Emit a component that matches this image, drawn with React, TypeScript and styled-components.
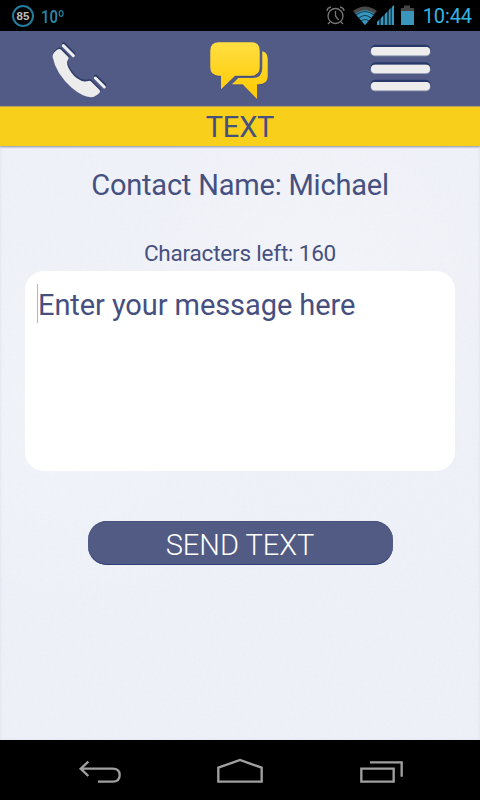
import React from "react";
import styled, { createGlobalStyle } from "styled-components";

const GlobalStyle = createGlobalStyle`
  * { box-sizing: border-box; }
  body { margin: 0; background: #000; font-family: Roboto, sans-serif; }
`;

const paperGrain =
  "url(\"data:image/svg+xml,%3Csvg xmlns='http://www.w3.org/2000/svg' width='240' height='240'%3E%3Cfilter id='n'%3E%3CfeTurbulence type='fractalNoise' baseFrequency='.35' numOctaves='3' stitchTiles='stitch'/%3E%3C/filter%3E%3Crect width='240' height='240' filter='url(%23n)' opacity='.035'/%3E%3C/svg%3E\")";

const Screen = styled.div`
  width: 480px;
  height: 800px;
  overflow: hidden;
  display: flex;
  flex-direction: column;
  background: #000;
`;

const StatusBar = styled.header`
  height: 31px;
  flex: none;
  display: flex;
  justify-content: space-between;
  padding: 0 8px 0 12px;
`;

const StatusGroup = styled.div`
  display: flex;
  align-items: center;
`;

const BatteryRing = styled.div`
  width: 22px;
  height: 22px;
  border: 2px solid #237b9c;
  border-radius: 50%;
  display: flex;
  align-items: center;
  justify-content: center;
  color: #bdbdbd;
  font: bold 11.5px/18px "Liberation Sans", sans-serif;
`;

const Temperature = styled.span`
  margin: 2px 0 0 7px;
  color: #2586a9;
  font: 600 18px/20px Roboto, sans-serif;
  display: inline-block;
  transform: scaleX(0.82);
  transform-origin: left;
`;

const Clock = styled.time`
  color: #33b5e5;
  font-size: 20px;
  line-height: 31px;
  letter-spacing: -0.1px;
  margin-left: 7px;
  padding-top: 2px;
`;

const TopNav = styled.nav`
  height: 75px;
  flex: none;
  display: flex;
  gap: 75px;
  padding-left: 40px;
  background: #525b86;
`;

const NavButton = styled.button<{ $width: number }>`
  width: ${(p) => p.$width}px;
  height: 75px;
  padding: 0;
  border: 0;
  background: none;
  svg { display: block; }
`;

const TitleBar = styled.h1`
  height: 40px;
  flex: none;
  margin: 0;
  z-index: 1;
  background: #f8cf1b;
  border-top: 1px solid #bca456;
  color: #46507f;
  text-align: center;
  font-size: 29px;
  font-weight: 400;
  line-height: 41px;
  letter-spacing: -0.2px;
  box-shadow: 0 1px 2px #8c91ac;
`;

const Content = styled.main`
  height: 594px;
  flex: none;
  display: flex;
  flex-direction: column;
  align-items: center;
  color: #46507f;
  background: ${paperGrain},
    radial-gradient(circle at 65% 23%, #f4f5fa 0, transparent 34%),
    radial-gradient(circle at 15% 45%, #f2f5fa 0, transparent 36%),
    linear-gradient(#f0f2f9, #eef1f8);
  box-shadow: inset 0 0 3px #d9dce7;
`;

const ContactName = styled.p`
  margin: 21px 0 0;
  font-size: 29px;
  line-height: 36px;
  letter-spacing: -0.2px;
`;

const Counter = styled.p`
  margin: 37px 0 0;
  font-size: 22.5px;
  line-height: 26px;
  letter-spacing: -0.2px;
`;

const MessageField = styled.div`
  width: 430px;
  height: 200px;
  margin-top: 5px;
  padding: 13px 12px;
  border-radius: 19px;
  background: #fff;
`;

const Placeholder = styled.span`
  display: block;
  height: 39px;
  border-left: 1px solid #b5b5b5;
  font-size: 29px;
  line-height: 42px;
  letter-spacing: -0.08px;
`;

const SendButton = styled.button`
  width: 305px;
  height: 44px;
  margin-top: 50px;
  padding: 4px 0 0;
  border: 0;
  border-radius: 19px;
  background: #525b84;
  box-shadow: inset 0 -1px #2c407b, inset 0 1px #46527c;
  color: #fff;
  font: 300 29px/40px Roboto, sans-serif;
`;

const SystemNav = styled.footer`
  height: 60px;
  flex: none;
  display: flex;
  align-items: center;
  justify-content: center;
`;

const StatusIcons = () => (
  <svg width="106" height="31" viewBox="310 0 106 31">
    <g fill="none" stroke="#777" strokeWidth="1.3">
      <circle cx="335.5" cy="16" r="7.5" />
      <path d="M335.5 11v5l3 4M327 11q0-3 4-4M344 11q0-3-4-4M330 22l-2 2M341 22l2 2" />
    </g>
    <path d="M353 11Q365 2 377 11L365 25Z" fill="#484848" />
    <path d="M355.5 14Q365 6.5 374.5 14L365 25Z" fill="#3698c0" />
    <path d="M356 15Q365 8 374 15M359 18Q365 13 371 18M361 21Q365 18 369 21" fill="none" stroke="#133b4b" strokeWidth="1.2" />
    <path d="M377 25v-3l2-2v5zM381 25v-7l2-2v9zM385 25V14l2-2v13zM389 25V10l1.5-2v17zM392 25V7l2-2v20z" fill="#3797bd" />
    <path d="M377 25v-3l17-17v20z" fill="#3797bd" opacity=".45" />
    <path d="M401 8h3V5.5h6V8h4v9h-13z" fill="#454545" />
    <path d="M401 11h13v14h-13z" fill="#3995bc" />
  </svg>
);

const PhoneIcon = () => {
  const handset =
    "M38 82Q36 74 46 64Q53 57 58 57Q61 57 64 60L84 80Q88 84 85 88Q78 97 84 110Q94 132 111 145Q128 158 145 153Q150 151 154 155L179 180Q182 184 178 189Q166 201 153 202Q127 200 95 173Q48 132 38 82Z";
  return (
    <svg width="80" height="75" viewBox="0 3 240 225">
      <g fill="#2d3a67" stroke="#2d3a67" strokeWidth="2" transform="translate(1 -4)">
        <path d={handset} />
        <path d="M70 46l30 30M166 143l27 27" strokeWidth="11" strokeLinecap="round" />
      </g>
      <path d={handset} fill="#ececec" />
      <path d="M70 47l30 30M166 144l27 27" stroke="#eee" strokeWidth="9" strokeLinecap="round" />
    </svg>
  );
};

const ChatIcon = () => (
  <svg width="90" height="75" viewBox="0 3 270 225">
    <defs>
      <linearGradient id="gold" x1="0" y1="37" x2="0" y2="205" gradientUnits="userSpaceOnUse">
        <stop stopColor="#ffdf42" />
        <stop offset="1" stopColor="#ffc800" />
      </linearGradient>
      <filter id="soft" x="-20%" y="-20%" width="140%" height="140%">
        <feDropShadow dx="0" dy="2" stdDeviation="2" floodColor="#303a64" floodOpacity=".8" />
      </filter>
    </defs>
    <g fill="url(#gold)" filter="url(#soft)">
      <path d="M202 64Q218 67 218 88V138Q218 163 189 163H186V207L143 163H111L130 144H173Q202 144 202 113Z" />
      <path d="M72 37H169Q194 37 194 62V111Q194 137 168 137H120L78 178V137H72Q46 137 46 111V62Q46 37 72 37Z" />
    </g>
  </svg>
);

const MenuIcon = () => (
  <svg width="80" height="75" viewBox="0 3 240 225">
    {[48, 101, 153].map((y) => (
      <g key={y}>
        <rect x="32" y={y - 4} width="179" height="30" rx="14" fill="#29396a" />
        <rect x="32" y={y + 3} width="179" height="28" rx="13" fill="#9da2b8" />
        <rect x="33" y={y + 3} width="177" height="25" rx="12" fill="#ededed" />
      </g>
    ))}
  </svg>
);

const SystemIcons = () => (
  <svg width="360" height="60" viewBox="0 0 1080 180" fill="none" stroke="#a0a0a0" strokeWidth="7">
    <path d="M85 65L62 86L85 108M63 86H158Q179 86 179 105Q179 125 158 125H114" />
    <path d="M475 125V83L540 60L605 83V125Z" />
    <path d="M904 86H1001V125H904ZM930 67H1025V110" />
  </svg>
);

export default function App() {
  return (
    <>
      <GlobalStyle />
      <Screen>
        <StatusBar>
          <StatusGroup>
            <BatteryRing>85</BatteryRing>
            <Temperature>10º</Temperature>
          </StatusGroup>
          <StatusGroup>
            <StatusIcons />
            <Clock>10:44</Clock>
          </StatusGroup>
        </StatusBar>
        <TopNav>
          <NavButton $width={80} aria-label="Call"><PhoneIcon /></NavButton>
          <NavButton $width={90} aria-label="Messages"><ChatIcon /></NavButton>
          <NavButton $width={80} aria-label="Menu"><MenuIcon /></NavButton>
        </TopNav>
        <TitleBar>TEXT</TitleBar>
        <Content>
          <ContactName>Contact Name: Michael</ContactName>
          <Counter>Characters left: 160</Counter>
          <MessageField>
            <Placeholder>Enter your message here</Placeholder>
          </MessageField>
          <SendButton>SEND TEXT</SendButton>
        </Content>
        <SystemNav><SystemIcons /></SystemNav>
      </Screen>
    </>
  );
}
